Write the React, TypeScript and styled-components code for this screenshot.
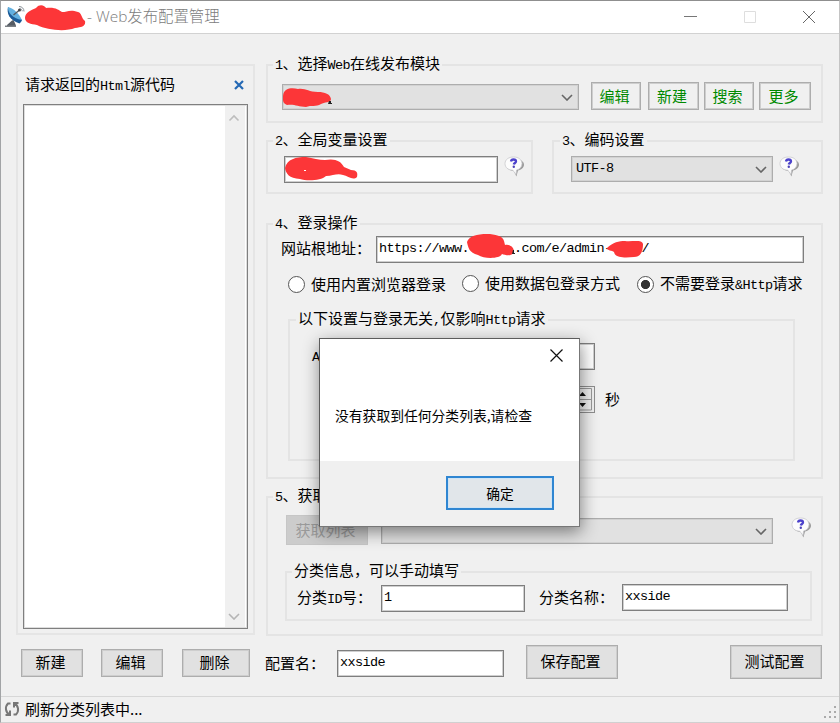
import React from "react";
import styled, { createGlobalStyle } from "styled-components";

const Global = createGlobalStyle`
  * { box-sizing: border-box; }
  body { margin: 0; background: #f0f0f0; overflow: hidden; }
  button, input { margin: 0; }
`;

const cjk = `"Noto Sans CJK SC", sans-serif`;

const Window = styled.main`
  display: flex;
  flex-direction: column;
  position: relative;
  width: 840px;
  height: 723px;
  background: #f0f0f0;
  border-top: 1px solid #8f8f8f;
  border-left: 1px solid #a2a4a6;
  border-right: 1px solid #c4c4c4;
  border-bottom: 1px solid #d0d0d0;
  font: 15px/20px ${cjk};
  color: #000;
  overflow: hidden;
`;

const TitleBar = styled.header`
  display: flex;
  align-items: center;
  height: 33px;
  flex: none;
  background: #fff;
  border-bottom: 1px solid #d2d2d2;
  padding-left: 3px;
`;
const TitleText = styled.span`
  margin-left: 1px;
  font: 300 15.4px/20px "Open Sans", ${cjk};
  color: #7c7c7c;
  flex: 1;
  white-space: pre;
`;
const Controls = styled.div`
  display: flex;
  gap: 46px;
  margin-right: 23px;
  height: 14px;
`;

const Body = styled.div`
  display: flex;
  height: 602px;
  flex: none;
  padding: 30px 0 0 15px;
  gap: 11px;
`;
const Panel = styled.section`
  width: 239px;
  height: 571px;
  border: 2px solid #e5e5e5;
  padding: 9px 6px 0 5px;
`;
const PanelHead = styled.div`
  display: flex;
  align-items: center;
  justify-content: space-between;
  height: 20px;
  padding: 0 3px 0 2px;
  margin-bottom: 9px;
`;
const Source = styled.div`
  display: flex;
  justify-content: flex-end;
  width: 225px;
  height: 525px;
  background: #fff;
  border: 1px solid #7f7f7f;
  box-shadow: inset 0 0 0 1px #ddd;
  padding: 1px 2px 1px 0;
`;
const Scroll = styled.div`
  display: flex;
  flex-direction: column;
  justify-content: space-between;
  align-items: center;
  width: 20px;
  background: #f0f0f0;
  padding: 8px 2px 7px 0;
`;

const Right = styled.div`
  display: flex;
  flex-direction: column;
  width: 557px;
`;
const Pair = styled.div`
  display: flex;
  gap: 19px;
  margin: 17px 0 29px;
`;
const Group = styled.section<{ $w: number; $h: number; $pad?: number }>`
  width: ${(p) => p.$w}px;
  height: ${(p) => p.$h}px;
  flex: none;
  border: 2px solid #e4e4e4;
  padding: 0 0 0 ${(p) => p.$pad ?? 14}px;
`;
const Legend = styled.h2<{ $left?: number }>`
  width: fit-content;
  height: 21px;
  margin: -13px 0 0 ${(p) => (p.$left ?? -8) - 1}px;
  padding: 0 2px;
  background: #f0f0f0;
  font: inherit;
  white-space: pre;
`;
const Row = styled.div<{ $top?: number; $left?: number }>`
  display: flex;
  align-items: flex-start;
  margin: ${(p) => p.$top ?? 0}px 0 0 ${(p) => p.$left ?? 0}px;
`;
const Label = styled.label<{ $w?: number; $top?: number; $left?: number }>`
  flex: none;
  width: ${(p) => (p.$w ? p.$w + "px" : "auto")};
  margin: ${(p) => p.$top ?? 0}px 0 0 ${(p) => p.$left ?? 0}px;
  white-space: pre;
`;
const Latin = styled.span`
  font: 13.5px/20px "Liberation Mono", monospace;
  letter-spacing: -0.6px;
`;
const Field = styled.div<{ $w: number; $h?: number }>`
  display: flex;
  flex: none;
  width: ${(p) => p.$w}px;
  height: ${(p) => p.$h ?? 27}px;
  background: #fff;
  border: 1px solid #7e7e7e;
  box-shadow: inset 0 0 0 1px #cfcfcf;
  padding: 2px 0 0 2px;
  white-space: pre;
`;
const Combo = styled.div<{ $w: number }>`
  display: flex;
  flex: none;
  align-items: center;
  justify-content: space-between;
  width: ${(p) => p.$w}px;
  height: 26px;
  background: #e1e1e1;
  border: 1px solid #adadad;
  box-shadow: inset 0 0 0 1px #d2d2d2;
  padding: 0 5px 0 4px;
`;
const Button = styled.button<{ $w: number; $h?: number; $kind?: "green" | "off" }>`
  flex: none;
  width: ${(p) => p.$w}px;
  height: ${(p) => p.$h ?? 28}px;
  padding: 0 3px ${(p) => (p.$kind ? 0 : 3)}px 0;
  font: 15px/20px ${cjk};
  color: ${(p) => (p.$kind === "green" ? "#008a00" : p.$kind === "off" ? "#9b9b9b" : "#000")};
  background: ${(p) => (p.$kind === "green" ? "#f0f0f0" : p.$kind === "off" ? "#cccccc" : "#e1e1e1")};
  border: 1px solid ${(p) => (p.$kind === "off" ? "#c6c6c6" : "#adadad")};
  box-shadow: inset 0 0 0 1px ${(p) => (p.$kind === "off" ? "#cccccc" : "#cecece")};
`;
const GreenRow = styled.div<{ $gap: number }>`
  margin-left: ${(p) => p.$gap}px;
`;
const Radio = styled.span<{ $on?: boolean }>`
  display: block;
  flex: none;
  width: 17px;
  height: 17px;
  border-radius: 50%;
  border: 1.5px solid #555;
  background: ${(p) => (p.$on ? "radial-gradient(circle, #333 4.2px, #fff 5px)" : "#fff")};
`;
const Choice = styled.div<{ $left: number; $top?: number }>`
  display: flex;
  align-items: center;
  gap: 6px;
  height: 20px;
  margin: ${(p) => p.$top ?? 0}px 0 0 ${(p) => p.$left}px;
  white-space: pre;
`;
const Spinner = styled.div`
  display: flex;
  justify-content: flex-end;
  width: 215px;
  height: 27px;
  background: #f0f0f0;
  border: 1px solid #8e8e8e;
  padding: 1px 2px 2px;
`;
const Footer = styled.div`
  display: flex;
  flex: none;
  height: 60px;
  padding: 9px 0 0 20px;
`;
const Slot = styled.div<{ $left?: number; $top?: number }>`
  margin: ${(p) => p.$top ?? 0}px 0 0 ${(p) => p.$left ?? 0}px;
`;
const Status = styled.footer`
  display: flex;
  align-items: center;
  flex: 1;
  border-top: 1px solid #d7d7d7;
  padding: 0 0 1px 3px;
  gap: 5px;
`;
const Grip = styled.svg`
  margin: 5px 2px 0 auto;
`;

const Dialog = styled.div`
  position: absolute;
  left: 318px;
  top: 337px;
  width: 261px;
  height: 189px;
  display: flex;
  flex-direction: column;
  background: #fff;
  border: 1px solid #5c5c5c;
  border-right-color: #777;
  border-bottom-color: #777;
  box-shadow: 1px 5px 16px rgba(0, 0, 0, 0.46);
  font: 13.8px/20px ${cjk};
`;
const DialogTop = styled.div`
  display: flex;
  justify-content: flex-end;
  padding: 10px 16px 0 0;
`;
const Message = styled.p`
  flex: 1;
  margin: 43px 0 0 15px;
  white-space: nowrap;
`;
const DialogFoot = styled.div`
  display: flex;
  justify-content: flex-end;
  height: 65px;
  background: #f0f0f0;
  padding: 15px 25px 0 0;
`;
const Confirm = styled.button`
  width: 108px;
  height: 34px;
  padding: 0;
  background: #e1e6ea;
  border: 2px solid #2f86d2;
  box-shadow: inset 0 0 0 1px #cfe4f5;
  font: 13.8px/20px ${cjk};
`;

const Scribble = styled.svg<{ $x: number; $y: number }>`
  position: absolute;
  left: ${(p) => p.$x - 1}px;
  top: ${(p) => p.$y - 1}px;
  fill: #fc3638;
`;

/* Half-width runs are set in the monospaced face, everything else in the CJK face. */
const Mixed = ({ children }: { children: string }) => (
  <>
    {children.split(/([\x20-\x7e]+)/).map((part, i) =>
      /^[\x20-\x7e]+$/.test(part) ? <Latin key={i}>{part}</Latin> : part
    )}
  </>
);

const Chevron = ({ up, color = "#666" }: { up?: boolean; color?: string }) => (
  <svg width="12" height="8" viewBox="0 0 12 8" fill="none" stroke={color} strokeWidth="1.6">
    <path d={up ? "M1.5 6.5 6 2l4.500 4.500" : "M1 2 6 7l5-5"} />
  </svg>
);

const Help = () => (
  <svg width="21" height="22" viewBox="0 0 21 22">
    <path d="M11 3c5 0 9 2.200 9 5.800 0 3-3 5-6 5.700l-1.600 6-2.600-5.500C5 14.500 2 12 2 8.500 2 5 6 3 11 3Z" fill="#9a9a9a" />
    <path d="M9.500 1c5 0 8.500 2.700 8.500 6.500 0 3.500-2.500 6-5.500 6.500L12 18.500l-3.200-4.300C4 14 1 11.500 1 7.500 1 3.600 4.700 1 9.500 1Z" fill="#fcfcfc" stroke="#c8c8cb" strokeWidth=".8" />
    <path d="M7 5.500c.2-1.400 1.200-2 2.400-2 1.700 0 2.600.8 2.600 1.900 0 1.500-2 1.600-2.200 3.100" fill="none" stroke="#4d43cc" strokeWidth="2.300" />
    <circle cx="9.800" cy="10.800" r="1.200" fill="#4b42b8" />
  </svg>
);

const Dish = () => (
  <svg width="22" height="24" viewBox="0 0 22 24">
    <path d="M8 15.500 3 20v2h9v-1.500L9.500 15Z" fill="#555c64" />
    <path d="M1 20.500h11V22H1Z" fill="#7a7f84" />
    <path d="M4 2C2.500 8 5 15 15.500 18.500 17 17 18 15.500 18 15Z" fill="#1b5b98" />
    <path d="M4 2c-.5 5 4 11.500 14 13C15 8.500 10 3.500 4 2Z" fill="#63b0df" />
    <path d="m9.500 10 6-5" stroke="#525a62" strokeWidth="1.300" />
    <circle cx="15.500" cy="5" r="1.500" fill="#444" />
    <path d="M15 1.500c3 0 5 2 5 5M15.500 3.500c1.500 0 2.700 1.200 2.700 2.800" fill="none" stroke="#8b9299" />
  </svg>
);

export default function App() {
  return (
    <>
      <Global />
      <Window>
        <TitleBar>
          <Dish />
          <Slot $left={60} />
          <TitleText>- Web发布配置管理</TitleText>
          <Controls>
            <svg width="14" height="14"><path d="M0 6.500h13" stroke="#777" /></svg>
            <svg width="12" height="14"><path d="M.5 1.500h11v11H.5Z" fill="none" stroke="#dedede" /></svg>
            <svg width="14" height="14"><path d="m1 1 12 12M13 1 1 13" stroke="#666" /></svg>
          </Controls>
        </TitleBar>

        <Body>
          <Panel>
            <PanelHead>
              <span><Mixed>请求返回的Html源代码</Mixed></span>
              <svg width="10" height="10"><path d="m1 1 8 8M9 1 1 9" stroke="#2468b4" strokeWidth="2.200" /></svg>
            </PanelHead>
            <Source>
              <Scroll>
                <Chevron up color="#bdbdbd" />
                <Chevron color="#b5b5b5" />
              </Scroll>
            </Source>
          </Panel>

          <Right>
            <Group $w={557} $h={59}>
              <Legend><Mixed>1、选择Web在线发布模块</Mixed></Legend>
              <Row $top={8}>
                <Slot $top={2}><Combo $w={297}><span /><Chevron /></Combo></Slot>
                <GreenRow $gap={12}><Button $w={50} $kind="green">编辑</Button></GreenRow>
                <GreenRow $gap={7}><Button $w={51} $kind="green">新建</Button></GreenRow>
                <GreenRow $gap={5}><Button $w={50} $kind="green">搜索</Button></GreenRow>
                <GreenRow $gap={5}><Button $w={52} $kind="green">更多</Button></GreenRow>
              </Row>
            </Group>

            <Pair>
              <Group $w={267} $h={54} $pad={16}>
                <Legend $left={-10}><Mixed>2、全局变量设置</Mixed></Legend>
                <Row $top={6}>
                  <Field $w={214} />
                  <Slot $left={6}><Help /></Slot>
                </Row>
              </Group>
              <Group $w={271} $h={54} $pad={17}>
                <Legend $left={-10}><Mixed>3、编码设置</Mixed></Legend>
                <Row $top={6}>
                  <Combo $w={202}><Mixed>UTF-8</Mixed><Chevron /></Combo>
                  <Slot $left={6}><Help /></Slot>
                </Row>
              </Group>
            </Pair>

            <Group $w={557} $h={256}>
              <Legend><Mixed>4、登录操作</Mixed></Legend>
              <Row $top={3}>
                <Label $w={95} $top={2} $left={-1}>网站根地址：</Label>
                <Field $w={428}><Mixed>{"https://www.      .com/e/admin-    /"}</Mixed></Field>
              </Row>
              <Row $top={11}>
                <Choice $left={6}><Radio /><span>使用内置浏览器登录</span></Choice>
                <Choice $left={16} $top={-1}><Radio /><span>使用数据包登录方式</span></Choice>
                <Choice $left={17}><Radio $on /><span><Mixed>不需要登录&Http请求</Mixed></span></Choice>
              </Row>
              <Row $top={25} $left={6}>
                <Group $w={507} $h={142} $pad={22}>
                  <Legend $left={-15}><Mixed>以下设置与登录无关,仅影响Http请求</Mixed></Legend>
                  <Row $top={14}>
                    <Label $w={68} $top={2}><Mixed>A</Mixed></Label>
                    <Field $w={215} />
                  </Row>
                  <Row $top={16} $left={68}>
                    <Spinner>
                      <svg width="19" height="23">
                        <path d="M0 .5h18.500v21.500H0M0 11.500h18" fill="none" stroke="#999" />
                        <path d="m6 8 3.500-4L13 8ZM6 15h7l-3.500 4Z" fill="#111" />
                      </svg>
                    </Spinner>
                    <Label $left={10} $top={3}>秒</Label>
                  </Row>
                </Group>
              </Row>
            </Group>

            <Slot $top={17}>
              <Group $w={557} $h={140}>
                <Legend><Mixed>5、获取列表</Mixed></Legend>
                <Row $top={9} $left={4}>
                  <Button $w={82} $h={30} $kind="off">获取列表</Button>
                  <Slot $left={13} $top={3}><Combo $w={392}><span /><Chevron /></Combo></Slot>
                  <Slot $left={18} $top={2}><Help /></Slot>
                </Row>
                <Row $top={26} $left={3}>
                  <Group $w={527} $h={50} $pad={10}>
                    <Legend $left={-4}>分类信息，可以手动填写</Legend>
                    <Row $top={3}>
                      <Label $w={84} $top={3}><Mixed>分类ID号：</Mixed></Label>
                      <Slot $top={1}><Field $w={144}><Mixed>1</Mixed></Field></Slot>
                      <Label $w={83} $top={3} $left={14}>分类名称：</Label>
                      <Field $w={166}><Mixed>xxside</Mixed></Field>
                    </Row>
                  </Group>
                </Row>
              </Group>
            </Slot>
          </Right>
        </Body>

        <Footer>
          <Slot $top={4}><Button $w={62}>新建</Button></Slot>
          <Slot $top={4} $left={18}><Button $w={62}>编辑</Button></Slot>
          <Slot $top={4} $left={19}><Button $w={68}>删除</Button></Slot>
          <Label $w={72} $left={15} $top={8}>配置名：</Label>
          <Slot $top={5}><Field $w={167}><Mixed>xxside</Mixed></Field></Slot>
          <Slot $left={22}><Button $w={92} $h={34}>保存配置</Button></Slot>
          <Slot $left={112}><Button $w={92} $h={34}>测试配置</Button></Slot>
        </Footer>

        <Status>
          <svg width="16" height="16" viewBox="0 0 16 16" fill="none" stroke="#777" strokeWidth="2">
            <path d="M6.500 2.500H4Q1.500 5 2 8.500 2.500 12 5.500 13.500M6 9.500v4.500H1.500M9.500 13.500H12Q14.500 11 14 7.500 13.500 4 10.500 2.500M10 6.500V2h4.500" />
          </svg>
          <span>刷新分类列表中...</span>
          <Grip width="14" height="14" fill="#aaa">
            <path d="M11 1h2v2h-2ZM6 6h2v2H6ZM11 6h2v2h-2ZM1 11h2v2H1ZM6 11h2v2H6ZM11 11h2v2h-2Z" />
          </Grip>
        </Status>

        <Scribble $x={24} $y={4} width="62" height="27">
          <path d="M1 14C1 8 8 6 12 4c4-5 9-2 10 0 10-1 12 2 16 4 5 0 8-3 16 0 4 1 3 6 7 9 1 5-3 6-10 7-10 4-28 2-38-3C7 20 1 19 1 14Z" />
        </Scribble>
        <Scribble $x={283} $y={88} width="49" height="20">
          <path d="M0 8C1-1 10 0 15 1c8-1 10 3 20 3 7 0 12 2 13 7 0 4-7 3-10 5-5 3-10 1-15 3-8 0-11-3-19-2C-1 15 0 11 0 8Z" />
          <path d="M46 13h2v2h1v1h-4Z" fill="#222" />
        </Scribble>
        <Scribble $x={285} $y={157} width="74" height="24">
          <path d="M0 11C2 2 11 0 21 0c7 1 13 3 19 3 10-2 16 1 19 7l7 3c6 0 7 3 6 7-4 4-9-1-14-2-6-2-10 1-17 1-5 5-20 5-26 3C4 21 1 17 0 11Z" />
          <path d="M19 13h2v1h-2Z" fill="#fff" />
        </Scribble>
        <Scribble $x={467} $y={234} width="52" height="25">
          <path d="M0 8C2 2 10 0 20 0c8 0 16 2 17 7l1 4c6-1 9 3 9 7-2 5-9 3-12 2-2 5-18 5-24 1C2 19 1 13 0 8Z" />
          <path d="M46 16h1v3h1v1h-3Z" fill="#222" />
        </Scribble>
        <Scribble $x={607} $y={240} width="38" height="19">
          <path d="M0 8C6 2 12 1 18 1c7 1 17-2 18 3 0 7-2 13-9 13-9 1-19 1-20-5C5 10 0 11 0 8Z" />
        </Scribble>

        <Dialog role="alertdialog">
          <DialogTop>
            <svg width="13" height="13"><path d="m.5.5 12 12m0-12-12 12" stroke="#111" strokeWidth="1.200" /></svg>
          </DialogTop>
          <Message>没有获取到任何分类列表,请检查</Message>
          <DialogFoot><Confirm>确定</Confirm></DialogFoot>
        </Dialog>
      </Window>
    </>
  );
}
